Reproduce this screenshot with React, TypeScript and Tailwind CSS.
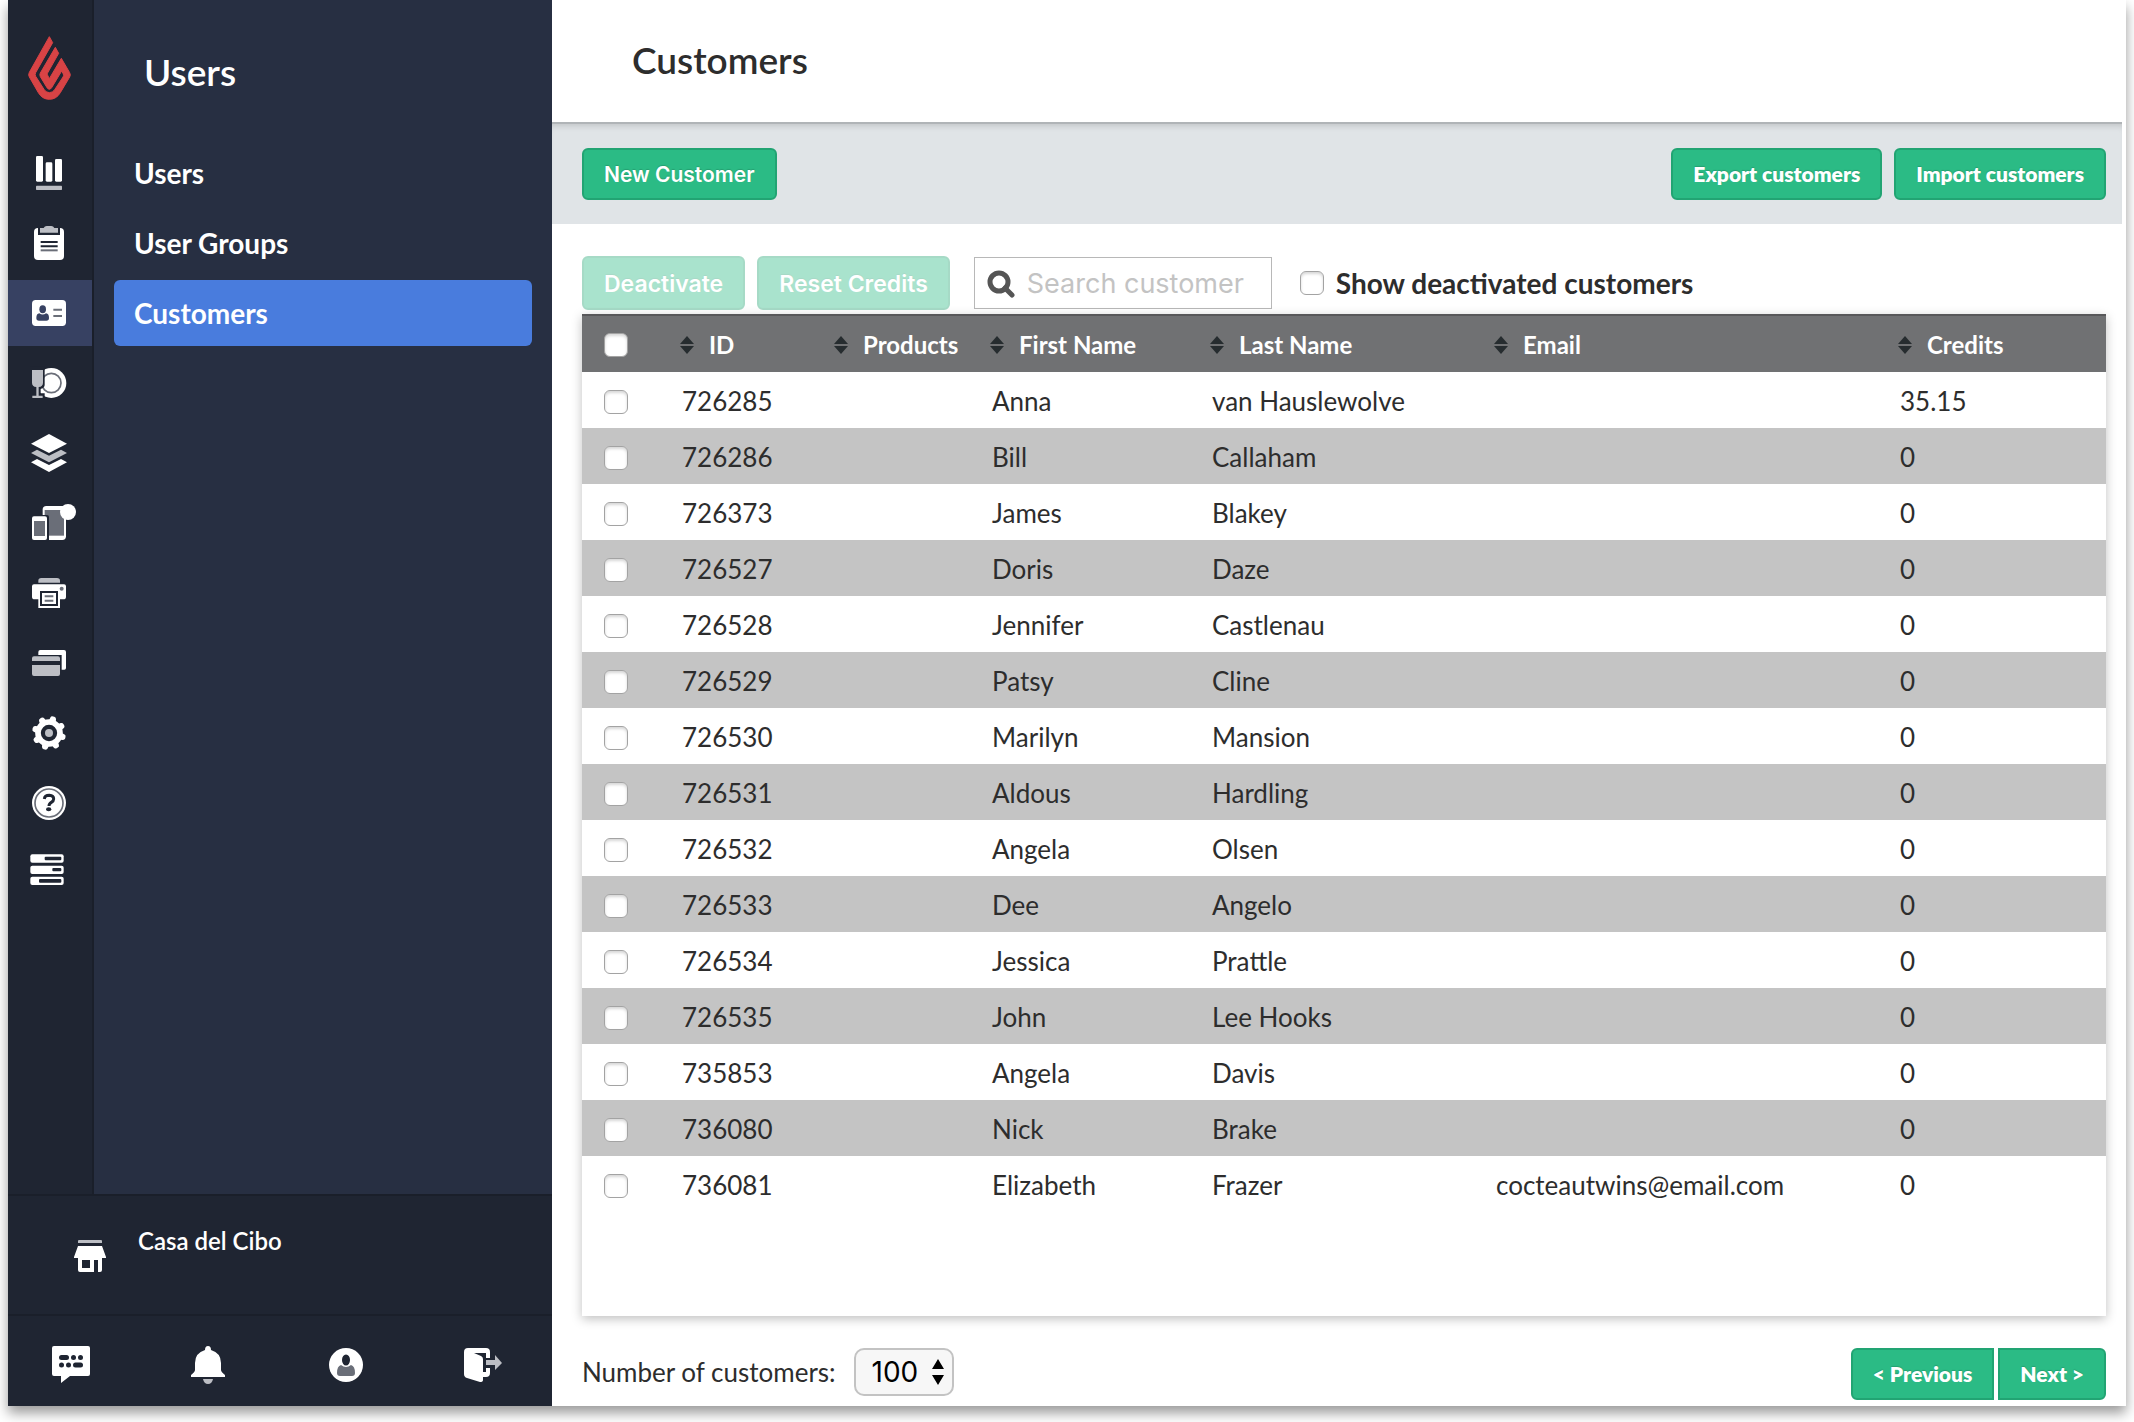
import type { ReactNode } from 'react';

const G = '#bcbec4';
const D = '#1f2532';
const M = '#6a6e78';

const railIcons: { name: string; box: string; art: ReactNode }[] = [
  { name: 'Reports', box: '60 429 180 180', art: <>
    <rect x="108" y="468" width="21" height="77" rx="4" fill="#fff" />
    <rect x="137" y="487" width="20" height="58" rx="4" fill="#fff" />
    <rect x="165" y="477" width="21" height="68" rx="4" fill="#fff" />
    <rect x="108" y="557" width="78" height="13" rx="2" fill={G} /></> },
  { name: 'Orders', box: '60 639 180 180', art: <>
    <rect x="102" y="684" width="90" height="96" rx="12" fill="#fff" />
    <path d="M114 680H180V705H114Z" fill={D} />
    <path d="M120 684H131Q134 678 140 678H154Q160 678 163 684H174V698H120Z" fill={G} />
    <path d="M122 726H173M122 739H173" stroke={D} strokeWidth="6" />
    <path d="M122 751H173" stroke={M} strokeWidth="6" /></> },
  { name: 'Users', box: '60 849 180 180', art: <>
    <rect x="96" y="900" width="102" height="78" rx="11" fill="#fff" />
    <ellipse cx="128" cy="928" rx="10" ry="12" fill="#374162" />
    <path d="M109 954Q109 941 118 940Q128 947 138 940Q147 941 147 954Q147 962 139 962H117Q109 962 109 954Z" fill="#374162" />
    <path d="M160 929H186M160 948H186" stroke={M} strokeWidth="6" /></> },
  { name: 'Menu', box: '60 9 180 180', art: <>
    <circle cx="154" cy="99" r="45" fill="#fff" />
    <circle cx="154" cy="99" r="29" fill="none" stroke={M} strokeWidth="5" />
    <path d="M90 50H134V105Q134 113 122 117V130H134V150H90Z" fill={D} />
    <path d="M96 60H129V98Q129 110 116 111V137H128V144H97V137H109V111Q96 110 96 98Z" fill={G} /></> },
  { name: 'Inventory', box: '60 219 180 180', art: <>
    <path d="M147 252L201 281L147 309L93 281Z" fill="#fff" />
    <path d="M111 299L147 317L183 299L201 309L147 337L93 309Z" fill={G} />
    <path d="M111 327L147 345L183 327L201 337L147 366L93 337Z" fill="#fff" /></> },
  { name: 'Devices', box: '60 429 180 180', art: <>
    <rect x="128" y="468" width="70" height="102" rx="11" fill="#fff" />
    <rect x="134" y="480" width="58" height="77" fill={M} />
    <path d="M90 495H141Q147 495 147 501V575H90Z" fill={D} />
    <rect x="96" y="499" width="45" height="71" rx="6" fill="#fff" />
    <rect x="102" y="513" width="33" height="45" fill={M} />
    <circle cx="204" cy="486" r="24" fill="#fff" /></> },
  { name: 'Printers', box: '60 639 180 180', art: <>
    <path d="M115 698V692Q115 685 124 684H171Q180 685 180 692V698Z" fill={G} />
    <path d="M102 703H192Q198 703 198 709V740Q198 748 190 748H180V774H115V748H104Q96 748 96 740V709Q96 703 102 703Z" fill="#fff" />
    <circle cx="185" cy="716" r="6" fill={M} />
    <rect x="123" y="726" width="48" height="39" fill="#fff" stroke={D} strokeWidth="6" />
    <path d="M134 739H160M134 752H160" stroke={M} strokeWidth="6" /></> },
  { name: 'Payments', box: '60 39 180 180', art: <>
    <path d="M115 105V96Q115 90 121 90H192Q198 90 198 96V144Q198 149 193 149H185V105Z" fill="#fff" />
    <path d="M96 123V115Q96 109 102 109H174Q180 109 180 115V123ZM96 135H180V162Q180 168 174 168H102Q96 168 96 162Z" fill={G} /></> },
  { name: 'Settings', box: '60 249 180 180', art: <>
    <circle cx="147" cy="339" r="33" fill="none" stroke="#fff" strokeWidth="17" />
    {[16, 61, 106, 151, 196, 241, 286, 331].map((a) => (
      <path key={a} d="M136 306L138 294Q139 288 145 288H149Q155 288 156 294L158 306Z" fill="#fff" transform={`rotate(${a} 147 339)`} />
    ))}
    <circle cx="147" cy="339" r="12" fill={G} /></> },
  { name: 'Help', box: '60 459 180 180', art: <>
    <circle cx="147" cy="549" r="51" fill="#fff" />
    <circle cx="147" cy="549" r="42" fill="none" stroke={M} strokeWidth="5" />
    <path d="M133 537Q134 526 148 526Q161 527 161 537Q161 543 154 547Q147 551 147 558" fill="none" stroke={D} strokeWidth="9" />
    <ellipse cx="146" cy="568" rx="8" ry="6" fill={D} /></> },
  { name: 'Servers', box: '60 669 180 180', art: <>
    <rect x="91" y="703" width="100" height="25" rx="6" fill="#fff" />
    <rect x="91" y="737" width="100" height="25" rx="6" fill="#fff" />
    <rect x="91" y="770" width="100" height="25" rx="6" fill="#fff" />
    <rect x="134" y="710" width="50" height="11" rx="3" fill={D} />
    <rect x="157" y="744" width="27" height="10" rx="3" fill={D} />
    <rect x="117" y="777" width="67" height="11" rx="3" fill={D} /></> },
];

const footIcons: { name: string; art: ReactNode }[] = [
  { name: 'Messages', art: <>
    <path d="M13 15H47Q49 15 49 17V43Q49 45 47 45H29L20 52V45H13Q11 45 11 43V17Q11 15 13 15Z" fill="#fff" />
    <rect x="18" y="24" width="10" height="5" rx="2.5" fill={D} />
    <circle cx="32.5" cy="26.5" r="2.5" fill={D} /><circle cx="39.5" cy="26.5" r="2.5" fill={D} />
    <circle cx="20.5" cy="34" r="2.5" fill={D} /><circle cx="27.5" cy="34" r="2.5" fill={D} />
    <rect x="32" y="31.5" width="10" height="5" rx="2.5" fill={D} /></> },
  { name: 'Notifications', art: <>
    <path d="M30 15Q33 15 33 19Q43 22 43 32V39Q43 41 47 44V46H13V44Q17 41 17 39V32Q17 22 27 19Q27 15 30 15Z" fill="#fff" />
    <path d="M25 48H35Q34 53 30 53Q26 53 25 48Z" fill={G} /></> },
  { name: 'Account', art: <>
    <circle cx="30" cy="34" r="17" fill="#fff" />
    <ellipse cx="30" cy="29" rx="4" ry="5.5" fill={D} />
    <path d="M21 42Q21 35 25 34Q30 38 35 34Q39 35 39 42Q39 45 36 45H24Q21 45 21 42Z" fill={M} /></> },
  { name: 'Log out', art: <>
    <path d="M15 17H33Q37 17 37 21V27H33V22H21L28 25Q30 26 30 28V41H33V37H37V42Q37 46 33 46H30V49Q30 51 27 51L14 47Q11 46 11 43V21Q11 17 15 17Z" fill="#fff" />
    <path d="M33 29H42V24L49 32L42 39V34H33Z" fill={G} /></> },
];

const rows = [
  ['726285', 'Anna', 'van Hauslewolve', '', '35.15'],
  ['726286', 'Bill', 'Callaham', '', '0'],
  ['726373', 'James', 'Blakey', '', '0'],
  ['726527', 'Doris', 'Daze', '', '0'],
  ['726528', 'Jennifer', 'Castlenau', '', '0'],
  ['726529', 'Patsy', 'Cline', '', '0'],
  ['726530', 'Marilyn', 'Mansion', '', '0'],
  ['726531', 'Aldous', 'Hardling', '', '0'],
  ['726532', 'Angela', 'Olsen', '', '0'],
  ['726533', 'Dee', 'Angelo', '', '0'],
  ['726534', 'Jessica', 'Prattle', '', '0'],
  ['726535', 'John', 'Lee Hooks', '', '0'],
  ['735853', 'Angela', 'Davis', '', '0'],
  ['736080', 'Nick', 'Brake', '', '0'],
  ['736081', 'Elizabeth', 'Frazer', 'cocteautwins@email.com', '0'],
];

const columns = ['ID', 'Products', 'First Name', 'Last Name', 'Email', 'Credits'];

const checkbox =
  'block size-6 shrink-0 appearance-none rounded-md border border-[#a3a3a3] bg-white shadow-[inset_0_2px_3px_rgba(0,0,0,0.16)] checked:bg-[#497cdd]';
const green =
  'border-2 border-[#22a473] bg-[#2bbb85] leading-7 text-white [text-shadow:0_-1px_1px_rgba(0,0,0,0.15)]';
const inter = "font-['Inter',sans-serif] font-semibold";

function SortIcon() {
  return (
    <svg className="h-[18px] w-4 shrink-0" viewBox="0 0 16 18" fill="#262c2f" aria-hidden="true">
      <path d="M8 0L15 8H1ZM8 18L15 10H1Z" />
    </svg>
  );
}

function Sidebar() {
  return (
    <aside className="flex w-[544px] shrink-0 flex-col bg-[#1f2532] text-white">
      <div className="flex flex-1">
        <nav aria-label="Sections" className="flex w-[86px] flex-col border-r-2 border-[#1a1f2a]">
          <div className="flex h-[140px] justify-center pt-9">
            <svg
              className="h-16 w-11"
              viewBox="83 108 132 192"
              fill="#d84345"
              stroke="#d84345"
              strokeWidth="3"
              strokeLinejoin="round"
              aria-label="Lightspeed"
            >
              <path d="M147 110L157 128L106 218Q103 224 106 229L131 268Q137 278 147 278Q157 278 163 269L188 231Q191 227 189 222L184 213L154 263Q147 273 140 263L120 230Q117 224 120 219L165 142L175 160L140 222L147 236L183 175L208 218Q212 224 208 231L180 278Q168 298 147 298Q126 298 114 278L87 231Q83 224 87 217Z" />
            </svg>
          </div>
          <ul className="flex flex-col gap-1">
            {railIcons.map((icon) => (
              <li key={icon.name}>
                <a
                  href="#"
                  aria-label={icon.name}
                  className={`flex h-[66px] items-center justify-center ${icon.name === 'Users' ? 'bg-[#374162]' : ''}`}
                >
                  <svg className="size-[60px]" viewBox={icon.box} aria-hidden="true">{icon.art}</svg>
                </a>
              </li>
            ))}
          </ul>
        </nav>
        <div className="flex-1 bg-[#272f42] px-5">
          <h2 className="pt-[47px] pb-[43px] pl-[30px] text-[37px] leading-[50px] font-semibold">Users</h2>
          <ul className="flex flex-col gap-1 text-[28px] leading-[66px] font-bold">
            {['Users', 'User Groups', 'Customers'].map((item) => (
              <li key={item}>
                <a href="#" className={`block rounded-md px-5 ${item === 'Customers' ? 'bg-[#497cdd]' : ''}`}>{item}</a>
              </li>
            ))}
          </ul>
        </div>
      </div>
      <div className="flex h-[120px] border-t-2 border-[#1a1f2a] pt-[29px] pl-[66px]">
        <svg className="mt-[14px] h-9 w-8" viewBox="0 0 32 36" aria-hidden="true">
          <path d="M4 4V2Q4 1 5 1H27Q28 1 28 2V4Z" fill={G} />
          <path d="M4 7H28L32 18V19H28V31Q28 33 26 33H24V21H20V33H6Q4 33 4 31V19H0V18Z" fill="#fff" />
          <path d="M8 21H16V29H8Z" fill={D} />
        </svg>
        <span className="pl-8 text-[24px] leading-8 font-semibold">Casa del Cibo</span>
      </div>
      <div className="flex h-[92px] items-center justify-between border-t-2 border-[#1a1f2a] pr-[39px] pl-[33px]">
        {footIcons.map((icon) => (
          <button key={icon.name} type="button" aria-label={icon.name}>
            <svg className="size-[60px]" viewBox="0 0 60 60" aria-hidden="true">{icon.art}</svg>
          </button>
        ))}
      </div>
    </aside>
  );
}

function CustomerTable() {
  return (
    <div className="min-h-[1002px] bg-white shadow-[0_3px_10px_rgba(0,0,0,0.25)]">
      <table className="w-full table-fixed border-collapse text-left">
        <colgroup>
          <col className="w-[88px]" />
          <col className="w-[154px]" />
          <col className="w-[156px]" />
          <col className="w-[220px]" />
          <col className="w-[284px]" />
          <col />
          <col className="w-[218px]" />
        </colgroup>
        <thead className="bg-[#707173] text-[24px] leading-8 text-white shadow-[inset_0_2px_0_#58585a]">
          <tr className="h-[58px]">
            <th className="pt-1 pl-[22px]">
              <input type="checkbox" aria-label="Select all customers" className={checkbox} />
            </th>
            {columns.map((c) => (
              <th key={c} className="pt-1 pl-[9px] font-bold whitespace-nowrap">
                <button type="button" className="flex items-center gap-[14px]">
                  <SortIcon />
                  {c}
                </button>
              </th>
            ))}
          </tr>
        </thead>
        <tbody className="text-[26px] leading-8 text-[#2d2d2d]">
          {rows.map(([id, first, last, email, credits]) => (
            <tr key={id} className="h-14 even:bg-[#c4c4c4]">
              <td className="pt-1 pl-[22px]">
                <input type="checkbox" aria-label={`Select ${first} ${last}`} className={checkbox} />
              </td>
              <td className="pt-px pl-3">{id}</td>
              <td />
              <td className="pt-px pl-3">{first}</td>
              <td className="pt-px pl-3">{last}</td>
              <td className="pt-px pl-3">{email}</td>
              <td className="pt-px pl-3">{credits}</td>
            </tr>
          ))}
        </tbody>
      </table>
    </div>
  );
}

export default function App() {
  return (
    <div className="min-h-screen overflow-hidden bg-white px-2 pb-4 font-['Lato',sans-serif]">
      <div className="flex min-h-[1406px] bg-white shadow-[0_7px_12px_rgba(0,0,0,0.4)]">
        <Sidebar />
        <main className="flex min-w-0 flex-1 flex-col text-[#2d2d2d]">
          <div className="pr-1">
            <h1 className="border-b-2 border-[#b0b4b7] pt-[35px] pb-[37px] pl-20 text-[37px] leading-[50px] font-semibold">Customers</h1>
            <div className="flex h-[100px] items-center gap-3 bg-[#e0e4e7] pr-4 pl-[30px] shadow-[inset_0_6px_6px_-4px_rgba(0,0,0,0.14)]">
              <button type="button" className={`${green} ${inter} mr-auto rounded-md px-5 pt-[11px] pb-[9px] text-[21px]`}>New Customer</button>
              <button type="button" className={`${green} rounded-md px-5 py-[10px] text-[21px] font-extrabold`}>Export customers</button>
              <button type="button" className={`${green} rounded-md px-5 py-[10px] text-[21px] font-extrabold`}>Import customers</button>
            </div>
          </div>
          <div className="flex flex-1 flex-col pr-5 pl-[30px]">
            <div className="flex h-[90px] items-center pt-8 pb-1">
              <button type="button" disabled className={`${green} ${inter} rounded-md px-5 pt-3 pb-[10px] text-[23px] opacity-40`}>Deactivate</button>
              <button type="button" disabled className={`${green} ${inter} ml-3 rounded-md px-5 pt-3 pb-[10px] text-[23px] opacity-40`}>Reset Credits</button>
              <label className="ml-6 flex h-[52px] w-[298px] items-center border border-[#b8b8b8] pt-0.5 pl-3">
                <svg className="size-7 shrink-0" viewBox="0 0 28 28" fill="none" stroke="#555" strokeWidth="5" aria-hidden="true">
                  <circle cx="12" cy="12" r="9" />
                  <path d="M18 18L25 25" strokeLinecap="round" />
                </svg>
                <input
                  type="text"
                  aria-label="Search customer"
                  placeholder="Search customer"
                  className="ml-3 min-w-0 flex-1 font-['Inter',sans-serif] text-[27px] leading-9 outline-none placeholder:text-[#c3c3c3]"
                />
              </label>
              <label className="ml-7 flex items-center gap-3 text-[28px] leading-9 font-bold">
                <input type="checkbox" className={checkbox} />
                Show deactivated customers
              </label>
            </div>
            <CustomerTable />
            <div className="flex items-start pt-8 pb-[6px]">
              <label htmlFor="count" className="text-[26px] leading-[48px]">Number of customers:</label>
              <div className="relative ml-[18px]">
                <select
                  id="count"
                  defaultValue="100"
                  className="block h-12 w-[100px] appearance-none rounded-[10px] border-2 border-[#c3c3c3] bg-[#f7f7f7] pl-4 font-['Inter',sans-serif] text-[28px] leading-9 text-black"
                >
                  <option>25</option>
                  <option>50</option>
                  <option>100</option>
                </select>
                <svg className="pointer-events-none absolute top-[11px] right-[9px] h-[26px] w-[14px]" viewBox="0 0 14 26" aria-hidden="true">
                  <path d="M7 0L13 10H1ZM7 26L13 16H1Z" />
                </svg>
              </div>
              <div className="ml-auto flex gap-1">
                <button type="button" className={`${green} rounded-l-md px-5 py-[10px] text-[21px] font-extrabold`}>&lt; Previous</button>
                <button type="button" className={`${green} rounded-r-md px-5 py-[10px] text-[21px] font-extrabold`}>Next &gt;</button>
              </div>
            </div>
          </div>
        </main>
      </div>
    </div>
  );
}
